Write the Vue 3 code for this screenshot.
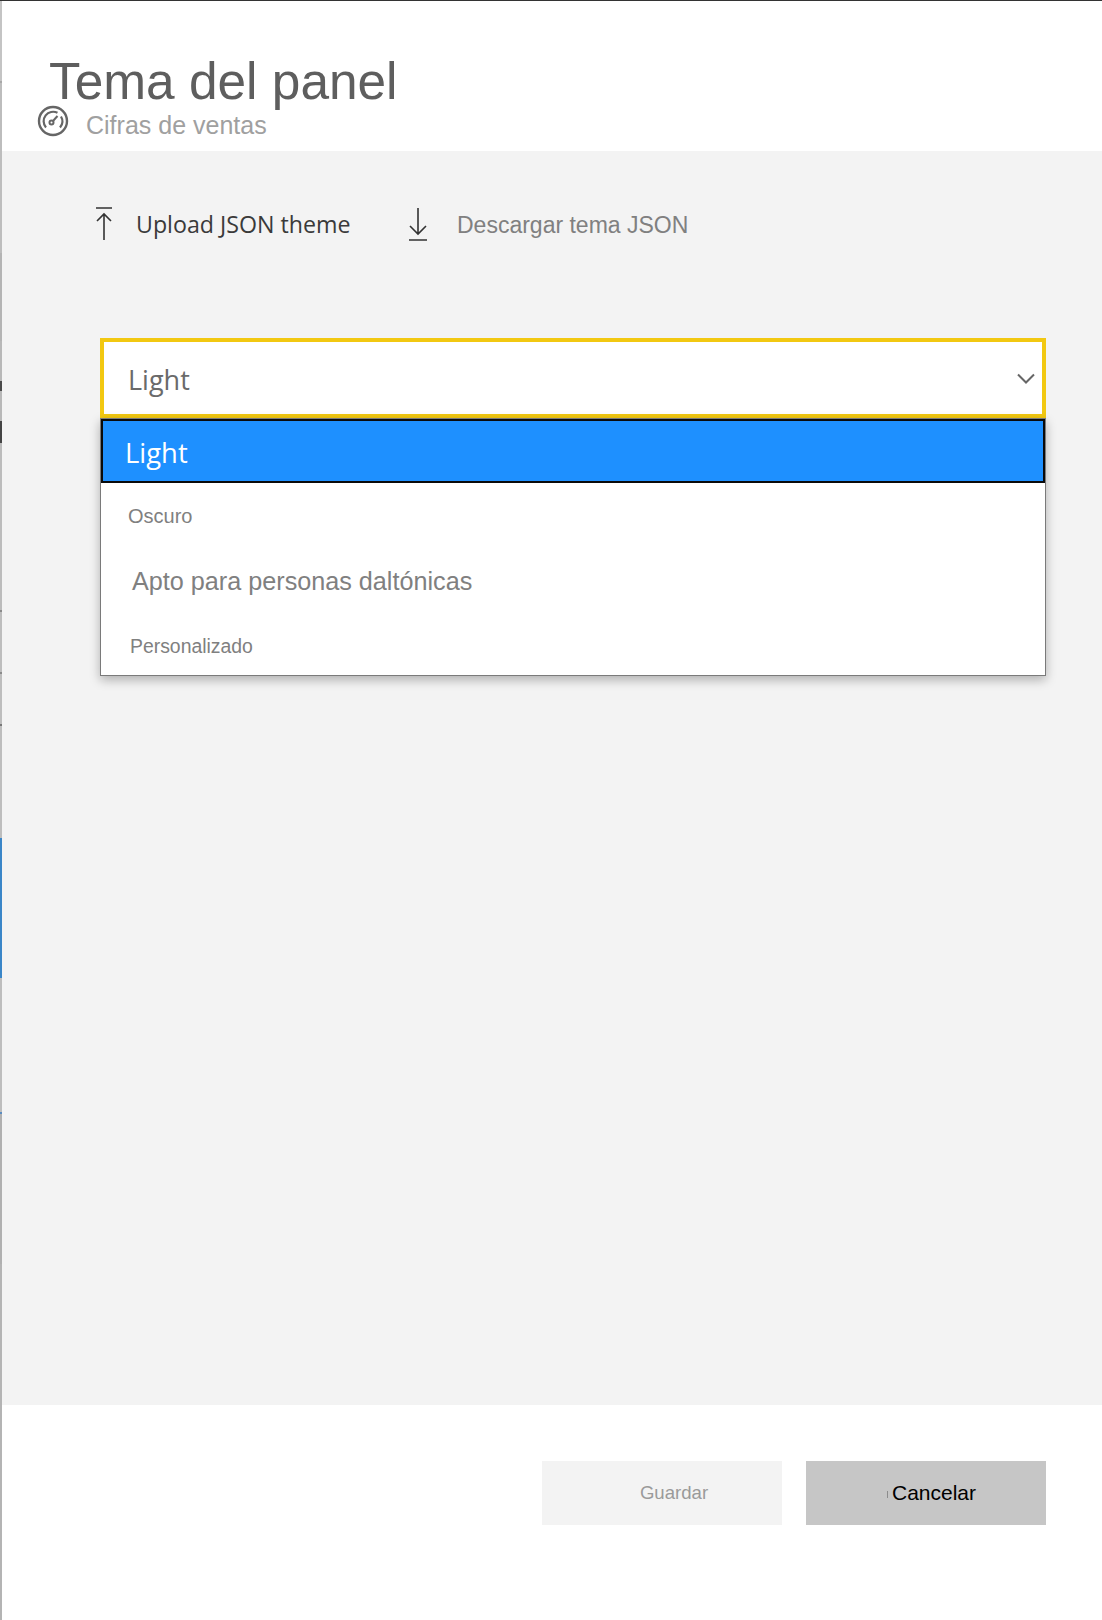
<script setup>
// thin slice of the page behind the dialog, top to bottom: [height, colour]
const strip = [
  [80, '#c4c4c4'], [2, '#a8a8a8'], [170, '#bdbdbd'], [88, '#b4b4b4'], [40, '#b8b8b8'],
  [10, '#4a4a4a'], [30, '#b8b8b8'], [22, '#444444'], [167, '#bcbcbc'], [2, '#8a8a8a'],
  [60, '#bdbdbd'], [2, '#8a8a8a'], [50, '#bdbdbd'], [2, '#777777'], [112, '#bdbdbd'],
  [140, '#3a86c8'], [134, '#bdbdbd'], [2, '#5a8cc0'], [150, '#b0b0b0'], [369, '#b4b4b4'],
]
const options = ['Oscuro', 'Apto para personas daltónicas', 'Personalizado']
</script>

<template>
  <div class="dialog">
    <div class="strip">
      <i v-for="(s, i) in strip" :key="i" :style="{ height: s[0] + 'px', background: s[1] }"></i>
    </div>

    <header class="head">
      <h1 class="title">Tema del panel</h1>
      <div class="sub">
        <svg class="gauge" width="32" height="32" viewBox="0 0 32 32" fill="none" stroke="#666" stroke-width="2.4">
          <circle cx="16" cy="16" r="14" />
          <path d="M9 22.5A9.5 9.5 0 0 1 20.5 7.8" stroke-width="2.2" />
          <path d="M24 11.5A9.5 9.5 0 0 1 23 22.5" stroke-width="2.2" />
          <circle cx="14.5" cy="17.5" r="2" stroke-width="2" />
          <path d="M16 16l4.5-5" stroke-width="2" />
        </svg>
        <span>Cifras de ventas</span>
      </div>
    </header>

    <main class="body">
      <div class="actions">
        <div class="action upload">
          <svg width="22" height="34" viewBox="0 0 22 34" fill="none" stroke="#333" stroke-width="1.6">
            <path d="M3 1h16M11 33V7M4 14l7-7 7 7" />
          </svg>
          <span>Upload JSON theme</span>
        </div>
        <div class="action download">
          <svg width="22" height="34" viewBox="0 0 22 34" fill="none" stroke="#333" stroke-width="1.6">
            <path d="M11 1v26M3 19l8 8 8-8M2 33h18" />
          </svg>
          <span>Descargar tema JSON</span>
        </div>
      </div>

      <div class="select">
        <div class="control">
          <span>Light</span>
          <svg width="18" height="11" viewBox="0 0 18 11" fill="none" stroke="#666" stroke-width="2">
            <path d="M1 1.5l8 8 8-8" />
          </svg>
        </div>
        <ul class="menu">
          <li class="selected">Light</li>
          <li v-for="(o, i) in options" :key="o" :class="'opt-' + i">{{ o }}</li>
        </ul>
      </div>
    </main>

    <footer class="foot">
      <button class="btn save">Guardar</button>
      <button class="btn cancel">Cancelar</button>
    </footer>
  </div>
</template>

<style>
html, body { margin: 0; background: #fff; }
</style>

<style scoped>
.dialog {
  position: relative;
  width: 1102px;
  height: 1620px;
  display: flex;
  flex-direction: column;
  overflow: hidden;
  background: #fff;
  border-top: 1px solid #333;
  box-sizing: border-box;
  font-family: 'Liberation Sans', Arial, sans-serif;
}
.strip {
  position: absolute;
  left: 0;
  top: 0;
  width: 2px;
  display: flex;
  flex-direction: column;
  z-index: 2;
}
.strip i { display: block; }

.head {
  height: 150px;
  padding-left: 49px;
  box-sizing: border-box;
}
.title {
  margin: 0;
  padding-top: 51px;
  font-size: 51.4px;
  line-height: 58px;
  font-weight: 400;
  color: #5e5e5e;
}
.sub {
  display: flex;
  align-items: flex-start;
  margin: -5px 0 0 -12px;
  gap: 17px;
  font-size: 25px;
  line-height: 32px;
  color: #a0a0a0;
}
.sub span { padding-top: 4px; }
.gauge { flex: none; }

.body {
  flex: 1;
  background: #f3f3f3;
  padding: 56px 56px 0 100px;
}
.actions {
  display: flex;
  align-items: center;
  height: 34px;
}
.action {
  display: flex;
  align-items: center;
}
.upload {
  margin-left: -7px;
  width: 314px;
  gap: 21px;
  color: #3a3a3a;
  font-family: 'Open Sans', sans-serif;
  font-size: 23.2px;
}
.download {
  gap: 28px;
  color: #808080;
  font-size: 23px;
}
.download span { padding-top: 2px; }

.select { margin-top: 97px; }
.control {
  height: 80px;
  box-sizing: border-box;
  border: 4px solid #f2c811;
  background: #fff;
  padding: 0 7px 0 24px;
  display: flex;
  align-items: center;
  justify-content: space-between;
  font-family: 'Open Sans', sans-serif;
  font-size: 27px;
  color: #6a6a6a;
}
.control span { padding-top: 2px; }
.menu {
  list-style: none;
  margin: 0;
  padding: 0;
  height: 258px;
  box-sizing: border-box;
  background: #fff;
  border: 1px solid #7a7a7a;
  box-shadow: 0 4px 10px rgba(0, 0, 0, 0.28);
  color: #808080;
}
.menu li {
  display: flex;
  align-items: center;
  box-sizing: border-box;
}
.menu .selected {
  height: 64px;
  border: 2px solid #0a0a0a;
  background: #1e90ff;
  color: #fff;
  padding: 2px 0 0 22px;
  font-family: 'Open Sans', sans-serif;
  font-size: 27.4px;
}
.menu .opt-0 { height: 65px; padding: 2px 0 0 27px; font-size: 20px; }
.menu .opt-1 { height: 66px; padding: 0 0 0 31px; font-size: 25.2px; }
.menu .opt-2 { height: 61px; padding: 4px 0 0 29px; font-size: 19.4px; }

.foot {
  height: 215px;
  box-sizing: border-box;
  padding: 56px 56px 0 0;
  display: flex;
  justify-content: flex-end;
  align-items: flex-start;
  gap: 24px;
}
.btn {
  width: 240px;
  height: 64px;
  border: 0;
  padding: 0;
  font-family: 'Liberation Sans', Arial, sans-serif;
  font-size: 20px;
}
.save {
  background: #f3f3f3;
  color: #9a9a9a;
  font-size: 18.6px;
  text-indent: 24px;
}
.cancel {
  position: relative;
  background: #c6c6c6;
  color: #000;
  text-indent: 16px;
  font-size: 21px;
}
/* faint sliver the reference has just before the label */
.cancel::before {
  content: '';
  position: absolute;
  left: 81px;
  top: 30px;
  width: 1px;
  height: 7px;
  background: #8c8c8c;
}
</style>
